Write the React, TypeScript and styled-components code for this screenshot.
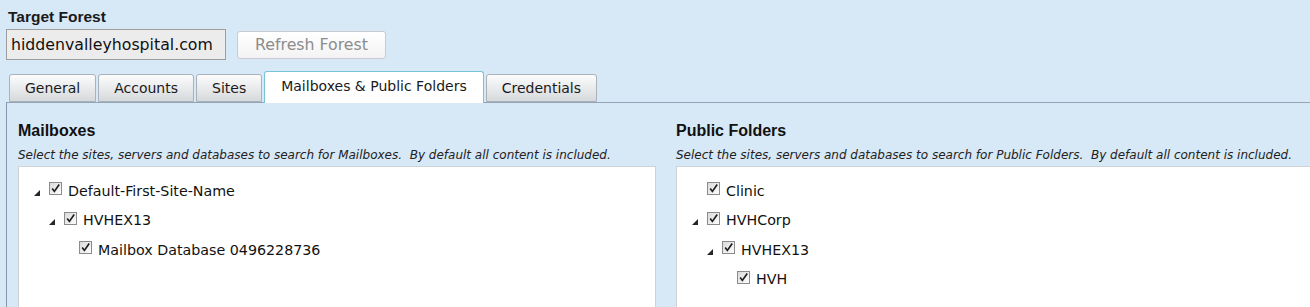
import styled, { createGlobalStyle } from "styled-components";

type TreeNode = {
  label: string;
  level: number;
  expandable?: boolean;
};

const mailboxNodes: TreeNode[] = [
  { label: "Default-First-Site-Name", level: 0, expandable: true },
  { label: "HVHEX13", level: 1, expandable: true },
  { label: "Mailbox Database 0496228736", level: 2 },
];

const folderNodes: TreeNode[] = [
  { label: "Clinic", level: 0 },
  { label: "HVHCorp", level: 0, expandable: true },
  { label: "HVHEX13", level: 1, expandable: true },
  { label: "HVH", level: 2 },
];

const tabs = ["General", "Accounts", "Sites", "Mailboxes & Public Folders", "Credentials"];
const activeTab = "Mailboxes & Public Folders";

const GlobalStyle = createGlobalStyle`
  html, body {
    margin: 0;
    padding: 0;
    background: #d7e8f7;
    overflow: hidden;
  }
  body {
    font-family: "DejaVu Sans", Verdana, sans-serif;
    color: #1a1a1a;
  }
`;

function Checkbox() {
  return (
    <CheckSvg width="13" height="13" viewBox="0 0 13 13">
      <defs>
        <linearGradient id="cbfill" x1="0" y1="0" x2="1" y2="1">
          <stop offset="0" stopColor="#d8d8d8" />
          <stop offset="1" stopColor="#ffffff" />
        </linearGradient>
      </defs>
      <rect x="0.5" y="0.5" width="12" height="12" fill="url(#cbfill)" stroke="#8a8b8c" />
      <path d="M3.2 6.4 L5.4 9.4 L10.2 2.6" fill="none" stroke="#1e1e1e" strokeWidth="1.7" />
    </CheckSvg>
  );
}

function Expander() {
  return (
    <svg width="6" height="6" viewBox="0 0 6 6">
      <polygon points="6,0 6,6 0,6" fill="#262626" />
    </svg>
  );
}

function Tree({ nodes }: { nodes: TreeNode[] }) {
  return (
    <TreeBox>
      {nodes.map((node, i) => (
        <TreeRow key={i} level={node.level}>
          <ExpanderSlot>{node.expandable && <Expander />}</ExpanderSlot>
          <Checkbox />
          <NodeLabel>{node.label}</NodeLabel>
        </TreeRow>
      ))}
    </TreeBox>
  );
}

export default function App() {
  return (
    <>
      <GlobalStyle />
      <Page>
        <Title>Target Forest</Title>
        <ForestRow>
          <ForestInput>hiddenvalleyhospital.com</ForestInput>
          <RefreshButton>Refresh Forest</RefreshButton>
        </ForestRow>
        <TabStrip>
          {tabs.map((t) => (
            <Tab key={t} active={t === activeTab}>
              {t}
            </Tab>
          ))}
        </TabStrip>
        <TabPanel>
          <Section>
            <SectionTitle>Mailboxes</SectionTitle>
            <Hint>
              Select the sites, servers and databases to search for Mailboxes.&nbsp; By default all content is included.
            </Hint>
            <Tree nodes={mailboxNodes} />
          </Section>
          <Section>
            <SectionTitle>Public Folders</SectionTitle>
            <Hint>
              Select the sites, servers and databases to search for Public Folders.&nbsp; By default all content is
              included.
            </Hint>
            <Tree nodes={folderNodes} />
          </Section>
        </TabPanel>
      </Page>
    </>
  );
}

const Page = styled.div`
  height: 307px;
  padding: 8px 0 0 6px;
  box-sizing: border-box;
  display: flex;
  flex-direction: column;
  overflow: hidden;
`;

const Title = styled.div`
  font-family: "Liberation Sans", Arial, sans-serif;
  font-weight: 700;
  font-size: 15.5px;
  line-height: 18px;
  padding-left: 2px;
`;

const ForestRow = styled.div`
  display: flex;
  align-items: center;
  gap: 11px;
  margin-top: 3px;
`;

const ForestInput = styled.div`
  width: 214px;
  height: 29px;
  border: 1px solid #9e9e9e;
  background: #ececec;
  font-size: 15.75px;
  line-height: 29px;
  padding-left: 4px;
  white-space: nowrap;
  color: #111;
`;

const RefreshButton = styled.div`
  width: 147px;
  height: 26px;
  border: 1px solid #c8ccd0;
  border-radius: 3px;
  background: linear-gradient(#ffffff, #f3f3f3);
  color: #8c8c8c;
  font-size: 15.75px;
  line-height: 26px;
  text-align: center;
`;

const TabStrip = styled.div`
  display: flex;
  align-items: flex-end;
  gap: 2px;
  margin-top: 10px;
  padding-left: 3px;
  height: 32px;
  position: relative;
  z-index: 1;
`;

const Tab = styled.div<{ active: boolean }>`
  height: ${(p) => (p.active ? 32 : 28)}px;
  margin-bottom: ${(p) => (p.active ? -1 : 0)}px;
  box-sizing: border-box;
  padding: 0 ${(p) => (p.active ? 16 : 15)}px;
  border: 1px solid ${(p) => (p.active ? "#79c3d6" : "#a9b2bb")};
  border-bottom: ${(p) => (p.active ? "none" : "1px solid #a9b2bb")};
  border-radius: 3px 3px 0 0;
  background: ${(p) => (p.active ? "#ffffff" : "linear-gradient(#fcfcfc, #d6d9dc)")};
  font-size: 14px;
  line-height: ${(p) => (p.active ? 28 : 27)}px;
  color: #1a1a1a;
  white-space: nowrap;
`;

const TabPanel = styled.div`
  flex: 1;
  display: grid;
  grid-template-columns: 638px 638px;
  column-gap: 20px;
  border-top: 1px solid #95a4b4;
  border-left: 1px solid #8397ad;
  padding: 19px 0 0 11px;
`;

const Section = styled.div`
  display: flex;
  flex-direction: column;
`;

const SectionTitle = styled.div`
  font-family: "Liberation Sans", Arial, sans-serif;
  font-weight: 700;
  font-size: 16px;
  line-height: 18px;
  color: #111;
`;

const Hint = styled.div`
  font-style: italic;
  font-size: 12px;
  line-height: 14px;
  margin-top: 8px;
  white-space: nowrap;
  color: #222;
`;

const TreeBox = styled.div`
  flex: 1;
  margin-top: 4px;
  background: #ffffff;
  border: 1px solid #cfd3d6;
  border-bottom: none;
  padding: 9px 0 0 15px;
`;

const TreeRow = styled.div<{ level: number }>`
  display: flex;
  align-items: center;
  height: 29.5px;
  padding-left: ${(p) => p.level * 15}px;
`;

const ExpanderSlot = styled.span`
  width: 15px;
  display: flex;
  align-items: flex-end;
  height: 8px;
  padding-top: 2px;
`;

const CheckSvg = styled.svg`
  flex: none;
  margin-top: -4px;
`;

const NodeLabel = styled.span`
  margin-left: 6px;
  font-size: 14.25px;
  color: #111;
  white-space: nowrap;
`;
